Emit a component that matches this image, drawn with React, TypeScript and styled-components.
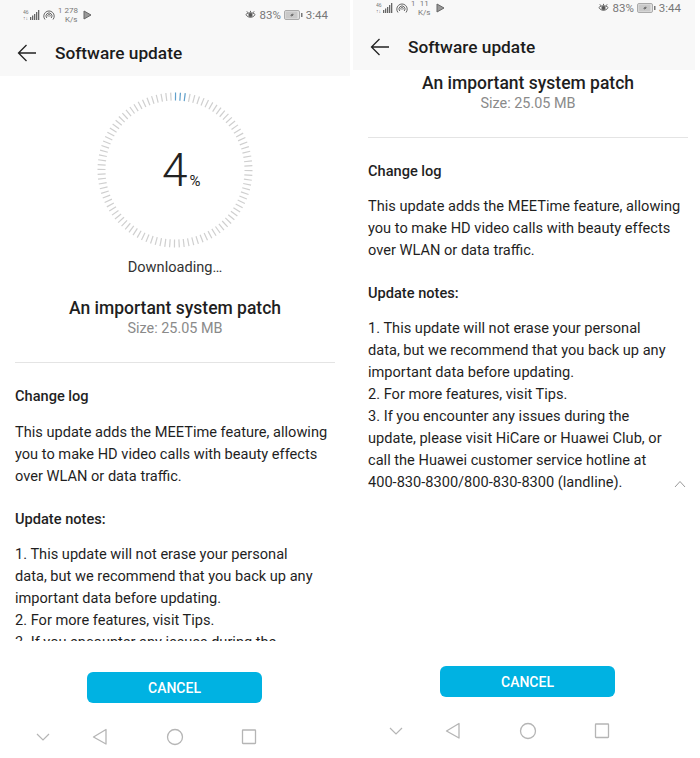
import React from 'react';
import styled, { createGlobalStyle } from 'styled-components';

const GlobalStyle = createGlobalStyle`
	html, body {
		margin: 0;
		padding: 0;
		background: #fff;
		font-family: Roboto, "Liberation Sans", sans-serif;
		color: #1f1f1f;
	}
`

const TICKS = Array.from({ length: 100 }, (_, i) => i);

const SignalIcon = () => (
	<svg width="17" height="12" viewBox="0 0 17 12">
		<text x="0" y="5" fontSize="5" fill="#777" fontFamily="Roboto">46</text>
		<text x="0" y="11" fontSize="5" fill="#777" fontFamily="Roboto">↑↓</text>
		<g fill="#666">
			<rect x="7" y="8" width="1.3" height="3" />
			<rect x="9" y="6.5" width="1.3" height="4.5" />
			<rect x="11" y="5" width="1.3" height="6" />
			<rect x="13" y="3" width="1.3" height="8" />
			<rect x="15" y="1" width="1.3" height="10" />
		</g>
	</svg>
);

const HotspotIcon = () => (
	<svg width="12" height="12" viewBox="0 0 12 12" fill="none" stroke="#666" strokeWidth="1">
		<path d="M2 10.5A5.2 5.2 0 1 1 10 10.5" />
		<path d="M3.8 9A3 3 0 1 1 8.2 9" />
		<path d="M5.2 7.6A1.2 1.2 0 1 1 6.8 7.6" />
	</svg>
);

const PlayIcon = () => (
	<svg width="9" height="10" viewBox="0 0 9 10">
		<path d="M1 1L8 5L1 9Z" fill="#999" stroke="#666" strokeWidth="1" strokeLinejoin="round" />
	</svg>
);

const EyeIcon = () => (
	<svg width="11" height="10" viewBox="0 0 12 10" fill="none" stroke="#555" strokeWidth="1">
		<path d="M1 4.5C3 2 9 2 11 4.5C9 8.5 3 8.5 1 4.5Z" />
		<circle cx="6" cy="5" r="1.8" fill="#555" />
		<path d="M2 1L3.2 2.6M6 0.5V2M10 1L8.8 2.6" />
	</svg>
);

const BatteryIcon = () => (
	<svg width="19" height="10" viewBox="0 0 19 10">
		<rect x="0.5" y="0.5" width="15" height="9" rx="1.5" fill="#e2e2e2" stroke="#aaa" />
		<rect x="1.5" y="1.5" width="12" height="7" fill="#c9c9c9" />
		<path d="M9.5 3L6 5.6H8L6.8 7L10 4.5H8Z" fill="#444" />
		<rect x="17" y="3" width="1.5" height="4" fill="#777" />
	</svg>
);

const BackIcon = () => (
	<svg width="20" height="18" viewBox="0 0 20 18" fill="none" stroke="#222" strokeWidth="1.3">
		<path d="M19 9H1.5M9.5 1L1.5 9L9.5 17" />
	</svg>
);

const StatusBar = ({ speed }: { speed: string }) => (
	<StatusRow>
		<StatusGroup>
			<SignalIcon />
			<HotspotIcon />
			<SimNumber>1</SimNumber>
			<Speed>{speed}<br />K/s</Speed>
			<PlayIcon />
		</StatusGroup>
		<StatusGroup>
			<EyeIcon />
			<span>83%</span>
			<BatteryIcon />
			<span>3:44</span>
		</StatusGroup>
	</StatusRow>
);

const NavBar = () => (
	<NavRow>
		<svg width="20" height="14" viewBox="0 0 20 14" fill="none" stroke="#b5b5b5" strokeWidth="1.2">
			<path d="M4 4L10 10L16 4" />
		</svg>
		<svg width="20" height="18" viewBox="0 0 20 18" fill="none" stroke="#b5b5b5" strokeWidth="1.3">
			<path d="M16 1.5V16L3.5 9Z" strokeLinejoin="round" />
		</svg>
		<svg width="20" height="18" viewBox="0 0 20 18" fill="none" stroke="#b5b5b5" strokeWidth="1.3">
			<circle cx="10" cy="9" r="7.5" />
		</svg>
		<svg width="20" height="18" viewBox="0 0 20 18" fill="none" stroke="#b5b5b5" strokeWidth="1.3">
			<rect x="3.5" y="2" width="13" height="13.5" rx="0.5" />
		</svg>
	</NavRow>
);

const Details = ({ logGap = 14, children }: { logGap?: number; children?: React.ReactNode }) => (
	<Content>
		<PatchTitle>An important system patch</PatchTitle>
		<PatchSize>Size: 25.05 MB</PatchSize>
		<Divider />
		<SectionTitle>Change log</SectionTitle>
		<Paragraph $gap={logGap}>This update adds the MEETime feature, allowing you to make HD video calls with beauty effects over WLAN or data traffic.</Paragraph>
		<SectionTitle $gap={21}>Update notes:</SectionTitle>
		<Paragraph $gap={13} $narrow>
			1. This update will not erase your personal data, but we recommend that you back up any important data before updating.<br />
			2. For more features, visit Tips.<br />
			3. If you encounter any issues during the update, please visit HiCare or Huawei Club, or call the Huawei customer service hotline at 400-830-8300/800-830-8300 (landline).
		</Paragraph>
		{children}
	</Content>
);

const Footer = () => (
	<FooterBox>
		<CancelButton>CANCEL</CancelButton>
		<NavBar />
	</FooterBox>
);

const App = () => {
	return (
		<Page>
			<GlobalStyle />
			<Pane $w={350} $h={758}>
				<TopBar $status={30} $gap={0}>
					<StatusBar speed="278" />
					<TitleRow><BackIcon /><Title>Software update</Title></TitleRow>
				</TopBar>
				<ScrollArea $h={565}>
					<Progress>
						<svg width="160" height="160" viewBox="0 0 160 160">
							{TICKS.map((i) => (
								<line
									key={i}
									x1="80" y1="2.5" x2="80" y2="10.5"
									stroke={i < 3 ? '#5f9fca' : '#cfcfcf'}
									strokeWidth="1.2"
									transform={`rotate(${i * 3.6 + 0.4} 80 80)`}
								/>
							))}
						</svg>
						<Percent>4<small>%</small></Percent>
					</Progress>
					<ProgressLabel>Downloading…</ProgressLabel>
					<Details />
				</ScrollArea>
				<Footer />
			</Pane>
			<Pane $w={342} $h={752}>
				<TopBar $status={16} $gap={8}>
					<StatusBar speed="11" />
					<TitleRow><BackIcon /><Title>Software update</Title></TitleRow>
				</TopBar>
				<ScrollArea $h={500} $top={2}>
					<Details logGap={13}>
						<Collapse viewBox="0 0 12 8" fill="none" stroke="#999" strokeWidth="1">
							<path d="M1 7L6 1.5L11 7" />
						</Collapse>
					</Details>
				</ScrollArea>
				<Footer />
			</Pane>
		</Page>
	)
}

export default App;

const Page = styled.div`
	display: flex;
	gap: 3px;
	width: 700px;
	height: 758px;
	overflow: hidden;
	background: #fff;
`

const Pane = styled.div<{ $w: number; $h: number }>`
	display: flex;
	flex-direction: column;
	flex: none;
	width: ${(p) => p.$w}px;
	height: ${(p) => p.$h}px;
`

const TopBar = styled.div<{ $status: number; $gap: number }>`
	flex: none;
	background: #f8f8f8;
	& > div:first-child {
		height: ${(p) => p.$status}px;
		margin-bottom: ${(p) => p.$gap}px;
	}
`

const StatusRow = styled.div`
	display: flex;
	align-items: center;
	justify-content: space-between;
	width: 305px;
	margin-left: 23px;
	font-size: 11.5px;
	color: #777;
`

const StatusGroup = styled.div`
	display: flex;
	align-items: center;
	gap: 3px;
`

const SimNumber = styled.span`
	font-size: 7.5px;
	margin: -9px -1px 0 0;
`

const Speed = styled.span`
	font-size: 8px;
	line-height: 9px;
	text-align: center;
	width: 14px;
	margin-right: 2px;
`

const TitleRow = styled.div`
	display: flex;
	align-items: center;
	gap: 18px;
	height: 46px;
	padding-left: 17px;
`

const Title = styled.div`
	font-size: 17.3px;
	font-weight: 500;
	color: #1c1c1c;
`

const ScrollArea = styled.div<{ $h: number; $top?: number }>`
	position: relative;
	flex: none;
	height: ${(p) => p.$h}px;
	padding-top: ${(p) => p.$top || 0}px;
	box-sizing: border-box;
	overflow: hidden;
`

const Progress = styled.div`
	position: relative;
	width: 160px;
	height: 160px;
	margin: 14px auto 0;
`

const Percent = styled.div`
	position: absolute;
	top: 50px;
	left: 67px;
	font-size: 46px;
	font-weight: 300;
	line-height: 60px;
	color: #222;
	small {
		font-size: 15px;
		font-weight: 400;
		margin-left: 2px;
	}
`

const ProgressLabel = styled.div`
	margin-top: 6px;
	margin-bottom: 19px;
	font-size: 14.6px;
	line-height: 22px;
	text-align: center;
	color: #333;
`

const Content = styled.div`
	position: relative;
	width: 320px;
	margin-left: 15px;
`

const PatchTitle = styled.div`
	font-size: 17.5px;
	font-weight: 500;
	line-height: 22px;
	text-align: center;
`

const PatchSize = styled.div`
	font-size: 14.4px;
	line-height: 20px;
	text-align: center;
	color: #8a8a8a;
`

const Divider = styled.div`
	height: 1px;
	margin: 23px 0 22px;
	background: #e4e4e4;
`

const SectionTitle = styled.div<{ $gap?: number }>`
	margin-top: ${(p) => p.$gap || 0}px;
	font-size: 14.6px;
	font-weight: 500;
	line-height: 22px;
`

const Paragraph = styled.div<{ $gap: number; $narrow?: boolean }>`
	margin-top: ${(p) => p.$gap}px;
	padding-right: ${(p) => (p.$narrow ? 15 : 0)}px;
	font-size: 14.6px;
	line-height: 22px;
`

const Collapse = styled.svg`
	position: absolute;
	right: 2px;
	bottom: 5px;
	width: 12px;
	height: 8px;
`

const FooterBox = styled.div`
	display: flex;
	flex-direction: column;
	align-items: stretch;
	margin-top: auto;
`

const CancelButton = styled.button`
	display: block;
	width: 175px;
	height: 31px;
	margin: 0 0 13px 87px;
	padding: 0;
	border: none;
	border-radius: 6px;
	background: #00b2e2;
	color: #fff;
	font-family: Roboto, "Liberation Sans", sans-serif;
	font-size: 14px;
	font-weight: 500;
`

const NavRow = styled.div`
	display: grid;
	grid-template-columns: 57px 75px 74px 20px;
	align-items: center;
	height: 42px;
	padding-left: 33px;
`
